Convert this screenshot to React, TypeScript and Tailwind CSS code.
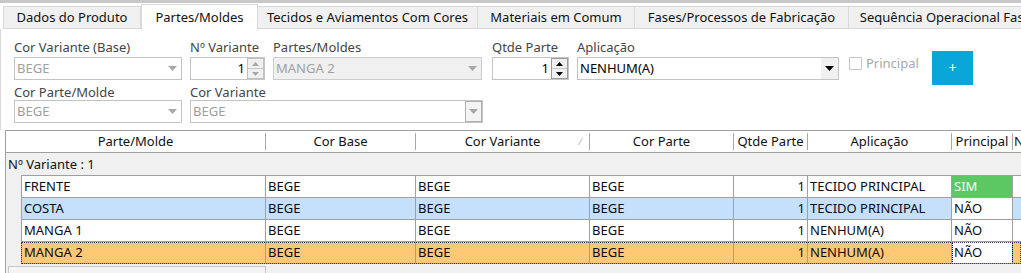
import React from "react";

const font = { fontFamily: '"Noto Sans", "Open Sans", sans-serif' };

const tabs = [
  { label: "Dados do Produto", w: "w-[138px]" },
  { label: "Partes/Moldes", w: "w-[117px]", active: true },
  { label: "Tecidos e Aviamentos Com Cores", w: "w-[220px]" },
  { label: "Materiais em Comum", w: "w-[157px]" },
  { label: "Fases/Processos de Fabricação", w: "w-[214px]" },
  { label: "Sequência Operacional Fases", w: "w-[200px]" },
];

const Arrow = ({ dark }: { dark?: boolean }) => (
  <svg width="9" height="5" viewBox="0 0 9 5">
    <path d="M0 0 L9 0 L4.5 5 Z" fill={dark ? "#000" : "#a8a8a8"} />
  </svg>
);

const Combo = ({
  value,
  w,
  disabled,
  gray,
  boxed,
}: {
  value: string;
  w: string;
  disabled?: boolean;
  gray?: boolean;
  boxed?: boolean;
}) => (
  <div
    className={`${w} h-[23px] flex items-center border ${
      gray ? "bg-[#f0f0f0] border-[#cccccc]" : "bg-white border-[#c4c4c4]"
    }`}
  >
    <div
      className={`flex-1 pl-[2px] text-[13px] leading-none ${
        disabled ? "text-[#a0a0a0]" : "text-black"
      }`}
    >
      {value}
    </div>
    <div
      className={`w-[17px] h-[21px] flex items-center justify-center ${
        boxed ? "border border-[#b0b0b0] bg-[#f4f4f4]" : disabled ? "" : "bg-[#f0f0f0]"
      }`}
    >
      <Arrow dark={!disabled} />
    </div>
  </div>
);

const Spin = ({ w, dim }: { w: string; dim?: boolean }) => (
  <div className={`${w} h-[23px] flex items-center border border-[#c4c4c4] bg-white`}>
    <div className="flex-1 text-right pr-[2px] text-[13px] leading-none text-black">1</div>
    <div
      className={`w-[17px] h-[21px] flex flex-col border ${
        dim ? "border-[#c0c0c0]" : "border-[#9a9a9a]"
      }`}
    >
      <div className="flex-1 flex items-center justify-center bg-[#f0f0f0] border-b border-[#c8c8c8]">
        <svg width="7" height="4" viewBox="0 0 7 4">
          <path d="M0 4 L7 4 L3.5 0 Z" fill={dim ? "#a8a8a8" : "#000"} />
        </svg>
      </div>
      <div className="flex-1 flex items-center justify-center bg-[#f0f0f0]">
        <svg width="7" height="4" viewBox="0 0 7 4">
          <path d="M0 0 L7 0 L3.5 4 Z" fill={dim ? "#a8a8a8" : "#000"} />
        </svg>
      </div>
    </div>
  </div>
);

const Label = ({ children, w }: { children: React.ReactNode; w?: string }) => (
  <div className={`${w ?? ""} text-[13px] leading-[15px] text-[#454545] whitespace-nowrap`}>
    {children}
  </div>
);

const cols = [
  { h: "Parte/Molde", w: "w-[260px]" },
  { h: "Cor Base", w: "w-[150px]" },
  { h: "Cor Variante", w: "w-[174px]", sort: true },
  { h: "Cor Parte", w: "w-[144px]" },
  { h: "Qtde Parte", w: "w-[74px]" },
  { h: "Aplicação", w: "w-[144px]" },
  { h: "Principal", w: "w-[61px]" },
  { h: "N", w: "w-[40px]" },
];

const rows = [
  { p: "FRENTE", ap: "TECIDO PRINCIPAL", pr: "SIM", bg: "bg-white" },
  { p: "COSTA", ap: "TECIDO PRINCIPAL", pr: "NÃO", bg: "bg-[#c4e0fb]" },
  { p: "MANGA 1", ap: "NENHUM(A)", pr: "NÃO", bg: "bg-white" },
  { p: "MANGA 2", ap: "NENHUM(A)", pr: "NÃO", bg: "bg-[#ffc874]", focus: true },
];

const cell = "h-full flex items-center px-[2px] border-r border-b border-[#a0a0a0] text-[13px] leading-none text-[#0a0a14] whitespace-nowrap overflow-hidden";

export default function App() {
  return (
    <div className="w-[1021px] h-[273px] bg-white overflow-hidden" style={font}>
      <div className="h-[3px] bg-[#c8c8c8]" />
      {/* tabs */}
      <div className="flex items-end h-[26px] pl-[3px] bg-white">
        {tabs.map((t) =>
          t.active ? (
            <div
              key={t.label}
              className={`${t.w} shrink-0 h-[26px] flex items-start justify-center pt-[3px] bg-white border-t border-l border-r border-[#d9d9d9] text-[13px] text-[#111] relative z-10 -mb-px`}
            >
              {t.label}
            </div>
          ) : (
            <div
              key={t.label}
              className={`${t.w} shrink-0 h-[23px] flex items-center justify-center bg-[#f0f0f0] border-t border-r border-b border-[#d9d9d9] first:border-l text-[13px] text-[#111] whitespace-nowrap overflow-hidden`}
            >
              {t.label}
            </div>
          )
        )}
      </div>
      {/* form */}
      <div className="border-l border-[#d9d9d9] h-[101px] pl-[13px] pt-[11px]">
        <div className="flex items-start h-[45px]">
          <div className="flex flex-col gap-[2px] w-[176px]">
            <Label>Cor Variante (Base)</Label>
            <Combo value="BEGE" w="w-[168px]" disabled />
          </div>
          <div className="flex flex-col gap-[2px] w-[83px]">
            <Label>Nº Variante</Label>
            <Spin w="w-[75px]" dim />
          </div>
          <div className="flex flex-col gap-[2px] w-[219px]">
            <Label>Partes/Moldes</Label>
            <Combo value="MANGA 2" w="w-[209px]" disabled gray />
          </div>
          <div className="flex flex-col gap-[2px] w-[85px]">
            <Label>Qtde Parte</Label>
            <Spin w="w-[77px]" />
          </div>
          <div className="flex flex-col gap-[2px] w-[272px]">
            <Label>Aplicação</Label>
            <Combo value="NENHUM(A)" w="w-[262px]" />
          </div>
          <div className="flex items-center gap-[4px] mt-[17px] w-[83px]">
            <div className="w-[13px] h-[13px] border border-[#c8c8c8] bg-white" />
            <span className="text-[13px] leading-none text-[#a8a8a8]">Principal</span>
          </div>
          <button className="mt-[11px] w-[41px] h-[34px] bg-[#0aa6d9] text-white text-[14px] leading-none">
            +
          </button>
        </div>
        <div className="flex items-start">
          <div className="flex flex-col w-[176px]">
            <Label>Cor Parte/Molde</Label>
            <Combo value="BEGE" w="w-[168px]" disabled />
          </div>
          <div className="flex flex-col">
            <Label>Cor Variante</Label>
            <Combo value="BEGE" w="w-[293px]" disabled boxed />
          </div>
        </div>
      </div>
      {/* grid */}
      <div className="ml-[5px] border-t border-l border-[#a0a0a0] bg-[#f0f0f0] h-[143px]">
        <div className="flex h-[22px] bg-white border-b border-[#a0a0a0]">
          {cols.map((c, i) => (
            <div
              key={c.h}
              className={`${c.w} shrink-0 h-full flex items-center py-[2px] relative`}
            >
              <div
                className={`flex-1 h-full flex items-center justify-center text-[13px] leading-none text-[#111] whitespace-nowrap overflow-hidden ${
                  i < cols.length - 1 ? "border-r border-[#a8a8a8]" : ""
                } ${c.h === "N" ? "justify-start pl-[1px]" : ""}`}
              >
                {c.h}
              </div>
              {c.sort && (
                <span className="absolute right-[9px] top-[4px] text-[9px] text-[#a0a0a0]">⁄</span>
              )}
            </div>
          ))}
        </div>
        <div className="h-[22px] flex items-center pl-[2px] text-[13px] leading-none text-[#111]">
          Nº Variante : 1
        </div>
        <div className="pl-[15px]">
          <div className="border-t border-[#a0a0a0]">
            {rows.map((r) => (
              <div
                key={r.p}
                className={`flex h-[22px] ${r.bg} ${
                  r.focus ? "outline outline-1 outline-dotted outline-[#3a3a6a] -outline-offset-1" : ""
                }`}
              >
                <div className={`w-[245px] shrink-0 border-l ${cell}`}>{r.p}</div>
                <div className={`w-[150px] shrink-0 ${cell}`}>BEGE</div>
                <div className={`w-[174px] shrink-0 ${cell}`}>BEGE</div>
                <div className={`w-[144px] shrink-0 ${cell}`}>BEGE</div>
                <div className={`w-[74px] shrink-0 justify-end ${cell}`}>1</div>
                <div className={`w-[144px] shrink-0 ${cell}`}>{r.ap}</div>
                <div
                  className={`w-[61px] shrink-0 ${cell} ${
                    r.pr === "SIM" ? "bg-[#5cc864] !text-white" : "bg-white"
                  } ${r.focus ? "outline outline-1 outline-dotted outline-black -outline-offset-1" : ""}`}
                >
                  {r.pr}
                </div>
                <div className={`flex-1 ${cell} border-r-0`} />
              </div>
            ))}
          </div>
        </div>
        <div className="flex mt-[2px] ml-[2px]">
          <div className="w-[258px] h-[10px] border border-[#c8c8c8] bg-[#f4f4f4]" />
        </div>
      </div>
    </div>
  );
}
